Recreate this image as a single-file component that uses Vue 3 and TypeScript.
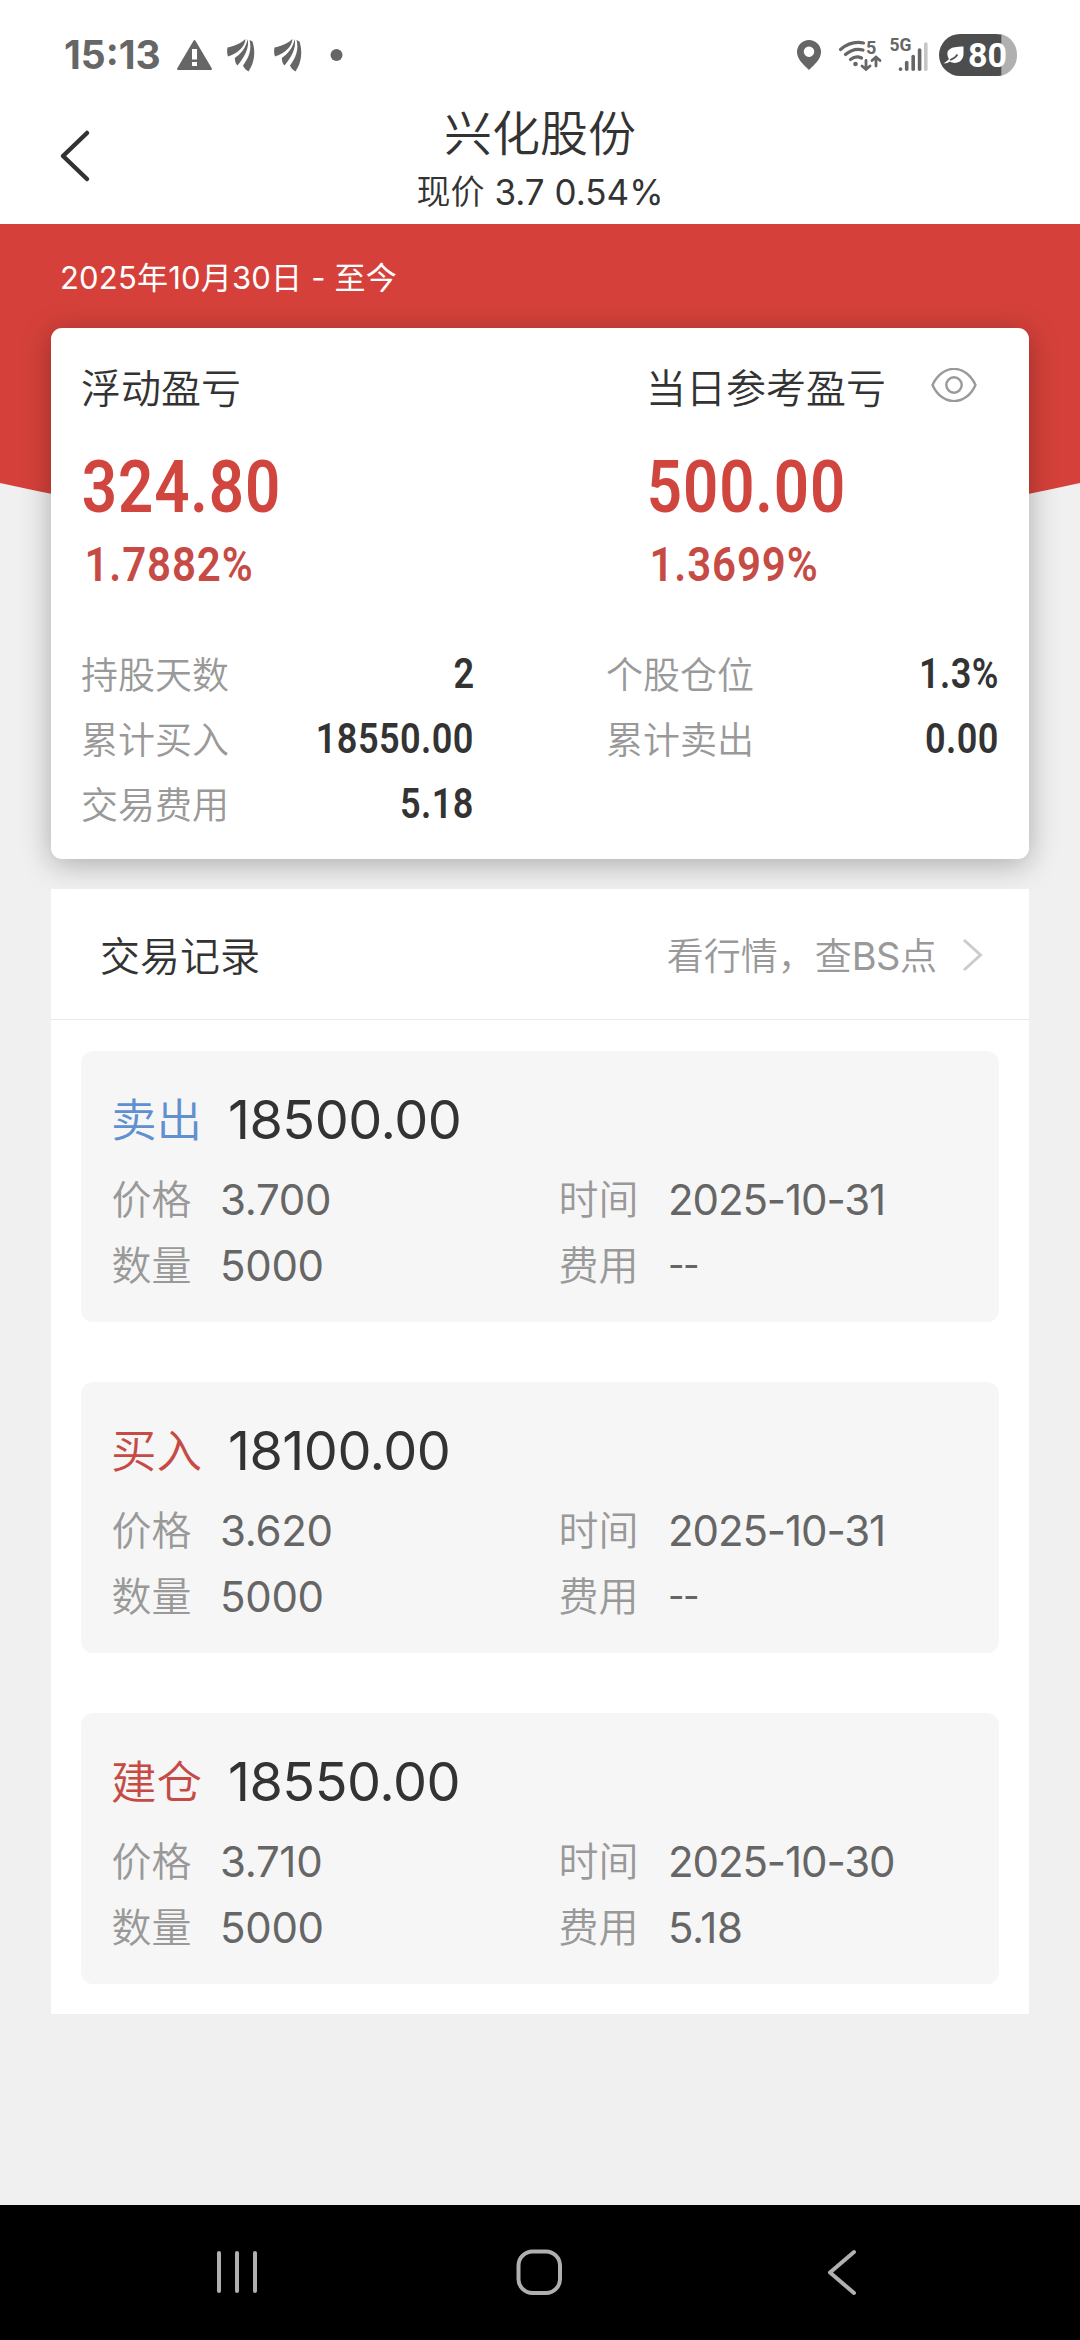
<script setup lang="ts">
interface Stat {
  label: string
  value: string
}

interface TradeRecord {
  kind: string
  side: 'buy' | 'sell'
  amount: string
  price: string
  quantity: string
  date: string
  fee: string
}

const profits = [
  { title: '浮动盈亏', value: '324.80', rate: '1.7882%' },
  { title: '当日参考盈亏', value: '500.00', rate: '1.3699%' },
]

const leftStats: Stat[] = [
  { label: '持股天数', value: '2' },
  { label: '累计买入', value: '18550.00' },
  { label: '交易费用', value: '5.18' },
]

const rightStats: Stat[] = [
  { label: '个股仓位', value: '1.3%' },
  { label: '累计卖出', value: '0.00' },
]

const records: TradeRecord[] = [
  { kind: '卖出', side: 'sell', amount: '18500.00', price: '3.700', quantity: '5000', date: '2025-10-31', fee: '--' },
  { kind: '买入', side: 'buy', amount: '18100.00', price: '3.620', quantity: '5000', date: '2025-10-31', fee: '--' },
  { kind: '建仓', side: 'buy', amount: '18550.00', price: '3.710', quantity: '5000', date: '2025-10-30', fee: '5.18' },
]
</script>

<template>
  <div class="screen">
    <div class="status">
      <span class="clock">15:13</span>
      <svg class="status-left" width="180" height="42" viewBox="170 34 180 42">
        <path d="M194.500 41 L211 69 H178 Z" fill="#666" stroke="#666" stroke-width="2" stroke-linejoin="round" />
        <rect x="192" y="49" width="5" height="10.500" fill="#fff" />
        <rect x="192" y="62" width="5" height="4" fill="#fff" />
        <g v-for="dx in [0, 47]" :key="dx" :transform="`translate(${dx} 0)`" fill="#666">
          <path d="M227.500 47.500 C234 46 240 44 245.500 39 C245 46 239 53 228 56.500 C226.800 53 227 50 227.500 47.500 Z" />
          <path d="M247.500 39 C250 47 244 58 237.500 65.500 C235.500 63.500 235 61 234.800 58 C241 54 246.500 47 247.500 39 Z" />
          <path d="M249.500 40 L252.500 41.500 C255.500 51 255 62 248.500 71.500 C246 70 244 68 243 65.500 C249 58 252 49 249.500 40 Z" />
        </g>
        <circle cx="336.500" cy="55" r="6" fill="#666" />
      </svg>
      <svg class="status-right" width="230" height="46" viewBox="790 32 230 46">
        <path fill="#666" fill-rule="evenodd" d="M809 40 a12 12 0 0 1 12 12 c0 7 -6 12 -12 18 c-6 -6 -12 -11 -12 -18 a12 12 0 0 1 12 -12 Z M809 46.500 a5.200 5.200 0 1 0 .01 0 Z" />
        <g fill="none" stroke="#666" stroke-width="3.200" stroke-linecap="round">
          <path d="M840.500 49.500 Q851 40.500 863.500 43" />
          <path d="M845.500 54.500 Q853.500 47.500 863 50" />
          <path d="M850.500 59.500 Q856 55 861.500 58" />
          <path d="M866 60.500 V69 M862 66 L866 69.500 L870 66" stroke-width="2.800" />
          <path d="M876 66 V57.500 M872 60.500 L876 57 L880 60.500" stroke-width="2.800" />
        </g>
        <circle cx="855.500" cy="64" r="2.300" fill="#666" />
        <text x="866" y="54" class="tiny" font-size="18">5</text>
        <text x="889.500" y="51" class="tiny" font-size="17.500" textLength="22" lengthAdjust="spacingAndGlyphs">5G</text>
        <g stroke="#666" stroke-width="3.600" stroke-linecap="round">
          <path d="M900.500 69 V69.200" />
          <path d="M906.700 62.500 V69.200" />
          <path d="M913.200 56.500 V69.200" />
          <path d="M919.600 50 V69.200" />
          <path d="M925.800 44 V69.200" stroke="#c6c6c6" />
        </g>
        <path d="M1001 34 a21 21 0 0 1 16 21 a21 21 0 0 1 -16 21 Z" fill="#b0b0b0" />
        <path d="M960 34 H996 Q999 34 1001.300 34.600 V75.400 Q999 76 996 76 H960 a21 21 0 0 1 0 -42 Z" fill="#4d4d4d" />
        <path d="M963.500 46.500 V54 C963.500 62 955 65 950 61.500 Q948 63.500 943.500 63.500 Q947 61.500 949 59 C944.500 50 950 46.500 963.500 46.500 Z" fill="#fff" />
        <path d="M950 60 Q955 58.500 957.500 54.500" fill="none" stroke="#4d4d4d" stroke-width="1.500" />
        <text x="968" y="66.500" class="level" textLength="39" lengthAdjust="spacingAndGlyphs">80</text>
      </svg>
    </div>

    <header class="nav">
      <svg class="back" width="36" height="56" viewBox="0 0 36 56">
        <path d="M31 5 L7 28 L31 51" fill="none" stroke="#333" stroke-width="4.500" stroke-linecap="round" stroke-linejoin="round" />
      </svg>
      <div class="heading">
        <div class="stock">兴化股份</div>
        <div class="quote"><span>现价</span><span class="quote-num">3.7 0.54%</span></div>
      </div>
    </header>

    <main class="body">
      <svg class="banner" width="1080" height="320" viewBox="0 0 1080 320">
        <path d="M0 0 H1080 V259 Q540 379 0 259 Z" fill="#d5413a" />
      </svg>
      <div class="period">2025年10月30日 - 至今</div>

      <section class="summary">
        <div class="profits">
          <div v-for="(p, i) in profits" :key="p.title" class="profit">
            <div class="profit-title">
              <span>{{ p.title }}</span>
              <svg v-if="i === 1" class="eye" width="46" height="34" viewBox="0 0 46 34">
                <path d="M1.500 17 C11 -4.500 35 -4.500 44.500 17 C35 38.500 11 38.500 1.500 17 Z" fill="none" stroke="#999" stroke-width="2.400" stroke-linejoin="round" />
                <circle cx="23" cy="17" r="7.700" fill="none" stroke="#999" stroke-width="2.400" />
              </svg>
            </div>
            <div class="profit-value">{{ p.value }}</div>
            <div class="profit-rate">{{ p.rate }}</div>
          </div>
        </div>
        <div class="stats">
          <div class="stat-col">
            <div v-for="s in leftStats" :key="s.label" class="stat">
              <span class="stat-label">{{ s.label }}</span><span class="stat-value">{{ s.value }}</span>
            </div>
          </div>
          <div class="stat-col">
            <div v-for="s in rightStats" :key="s.label" class="stat">
              <span class="stat-label">{{ s.label }}</span><span class="stat-value">{{ s.value }}</span>
            </div>
          </div>
        </div>
      </section>

      <section class="history">
        <div class="history-head">
          <span class="history-title">交易记录</span>
          <span class="history-link">看行情，查<span class="latin">BS</span>点</span>
          <svg class="chevron" width="22" height="34" viewBox="0 0 22 34">
            <path d="M2 2 L18.500 17 L2 32" fill="none" stroke="#ccc" stroke-width="3" />
          </svg>
        </div>
        <div class="records">
          <article v-for="(r, i) in records" :key="i" class="record">
            <div class="record-head">
              <span class="kind" :class="r.side">{{ r.kind }}</span>
              <span class="amount">{{ r.amount }}</span>
            </div>
            <div class="record-grid">
              <span class="key">价格</span><span class="val">{{ r.price }}</span>
              <span class="key">时间</span><span class="val date">{{ r.date }}</span>
              <span class="key">数量</span><span class="val">{{ r.quantity }}</span>
              <span class="key">费用</span><span class="val" :class="{ empty: r.fee === '--' }">{{ r.fee }}</span>
            </div>
          </article>
        </div>
      </section>
    </main>

    <footer class="keys">
      <svg width="1080" height="135" viewBox="0 0 1080 135" fill="none" stroke="#b0b0b0" stroke-width="4" stroke-linecap="round">
        <path d="M219 48 V86 M237 48 V86 M255 48 V86" />
        <rect x="518.500" y="46.500" width="41.500" height="41.500" rx="14" />
        <path d="M854 47 L830 67.500 L854 88" stroke-linejoin="round" />
      </svg>
    </footer>
  </div>
</template>

<style>
body {
  margin: 0;
  background: #f0f0f0;
}
</style>

<style scoped>
.screen {
  width: 1080px;
  height: 2340px;
  display: flex;
  flex-direction: column;
  overflow: hidden;
  background: #f0f0f0;
  color: #333;
  font-family: Inter, 'Noto Sans CJK SC', sans-serif;
  font-weight: 350;
}

.status {
  height: 110px;
  flex: none;
  display: flex;
  background: #fff;
  box-sizing: border-box;
  padding: 0 60px 0 64px;
}

.clock {
  width: 106px;
  padding-top: 32px;
  line-height: 46px;
  font-size: 39px;
  font-weight: 700;
  color: #666;
  white-space: nowrap;
}

.status-left {
  margin-top: 34px;
}

.status-right {
  margin: 32px 0 0 auto;
}

.tiny {
  font-family: Roboto, sans-serif;
  font-weight: 700;
  fill: #666;
}

.level {
  font-family: Roboto, sans-serif;
  font-size: 34px;
  font-weight: 700;
  fill: #fff;
}

.nav {
  height: 114px;
  flex: none;
  display: grid;
  grid-template-columns: 100px 1fr 100px;
  background: #fff;
}

.back {
  margin: 18px 0 0 56px;
}

.heading {
  padding-top: 1px;
  text-align: center;
}

.stock {
  font-size: 48px;
  line-height: 46px;
  white-space: nowrap;
}

.quote {
  display: flex;
  justify-content: center;
  gap: 10px;
  margin-top: 12px;
  font-size: 34px;
  line-height: 46px;
}

.quote-num {
  font-size: 35px;
  font-weight: 400;
}

.body {
  flex: 1;
  display: flex;
  flex-direction: column;
  position: relative;
}

.banner {
  position: absolute;
  left: 0;
  top: 0;
}

.period {
  position: relative;
  height: 104px;
  padding-left: 60px;
  font-size: 31px;
  font-weight: 400;
  letter-spacing: 0.2px;
  line-height: 107px;
  color: #fff;
}

.summary {
  position: relative;
  height: 531px;
  margin: 0 51px;
  box-sizing: border-box;
  border-radius: 11px;
  background: #fff;
  box-shadow: 0 5px 30px rgba(0, 0, 0, 0.29);
}

.profits {
  display: grid;
  grid-template-columns: 565px 1fr;
  padding: 28px 0 0 30px;
}

.profit-title {
  display: flex;
  align-items: center;
  height: 60px;
  font-size: 40px;
}

.eye {
  margin: -2px 0 0 45px;
}

.profit-value,
.profit-rate,
.stat-value {
  font-family: Roboto, sans-serif;
  font-weight: 600;
}

.profit-value {
  margin-top: 27px;
  padding-left: 1px;
  font-size: 73px;
  line-height: 88px;
  letter-spacing: 1px;
  color: #d0463f;
  transform: scaleX(0.847);
  transform-origin: left;
}

.profit-rate {
  margin-top: 10px;
  padding-left: 4px;
  font-size: 48px;
  line-height: 48px;
  letter-spacing: 1px;
  color: #c64b45;
  transform: scaleX(0.875);
  transform-origin: left;
}

.stats {
  display: grid;
  grid-template-columns: 393px 393px;
  column-gap: 132px;
  margin: 52px 0 0 30px;
}

.stat {
  display: flex;
  justify-content: space-between;
  align-items: center;
  height: 65px;
  font-size: 37px;
  color: #999;
}

.stat-label {
  padding-bottom: 2px;
}

.stat-value {
  font-size: 42px;
  letter-spacing: 0.5px;
  color: #333;
  transform: scaleX(0.86);
  transform-origin: right;
}

.history {
  position: relative;
  height: 1125px;
  margin: 30px 51px 0;
  background: #fff;
}

.history-head {
  display: flex;
  align-items: center;
  height: 131px;
  box-sizing: border-box;
  padding: 0 45px 0 49px;
  border-bottom: 1px solid #ebebeb;
}

.history-title {
  font-size: 40px;
}

.history-link {
  margin-left: auto;
  font-size: 37px;
  color: #999;
}

.latin {
  font-size: 38px;
  font-weight: 400;
  letter-spacing: -0.5px;
}

.chevron {
  margin: 1px 0 0 25px;
}

.records {
  display: flex;
  flex-direction: column;
  gap: 60px;
  padding: 31px 30px 0;
}

.record {
  height: 271px;
  box-sizing: border-box;
  padding: 21px 0 0 30px;
  border-radius: 12px;
  background: #f6f6f6;
}

.record-head {
  display: flex;
  align-items: center;
  height: 94px;
}

.kind {
  width: 117px;
  padding-bottom: 4px;
  font-size: 45.5px;
}

.kind.sell {
  color: #6090d0;
}

.kind.buy {
  color: #c64b45;
}

.amount {
  font-size: 54px;
  font-weight: 400;
  letter-spacing: -0.5px;
}

.record-grid {
  display: grid;
  grid-template-columns: 109px 338px 110px 1fr;
  grid-auto-rows: 66px;
  align-items: center;
}

.key {
  padding: 0 0 5px 0.5px;
  font-size: 40px;
  color: #999;
}

.val {
  font-size: 42px;
  font-weight: 400;
  letter-spacing: -0.3px;
  color: #666;
}

.val.date {
  letter-spacing: -1.1px;
}

.val.empty {
  font-size: 36px;
  letter-spacing: -1.5px;
}

.keys {
  height: 135px;
  flex: none;
  background: #000;
}
</style>
